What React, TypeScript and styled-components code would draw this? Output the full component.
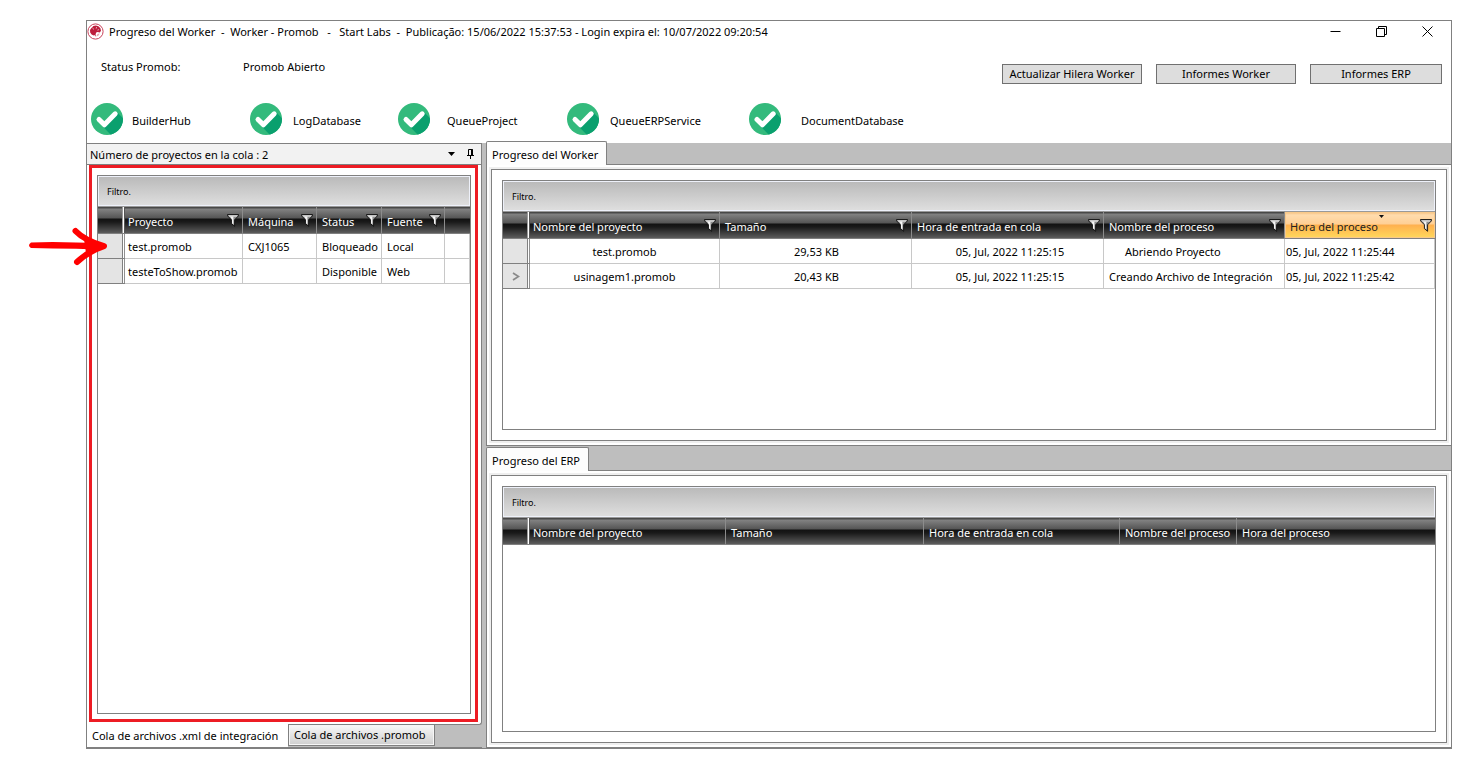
import React from 'react';
import styled, { createGlobalStyle, css } from 'styled-components';

const line = '#808080';
const strip = '#bebebe';
const cellLine = '#c8c8c8';
const darkHeader =
  'linear-gradient(to bottom, #484848 0 1px, #828282 2px, #555555 11px, #121212 12px, #1a1a1a 15px, #5c5c5c 100%)';

const GlobalStyle = createGlobalStyle`
  * { box-sizing: border-box; }
  body {
    margin: 0;
    background: #fff;
    color: #000;
    font: 11px/20px "Noto Sans", "Open Sans", sans-serif;
  }
  button {
    font: inherit;
    color: inherit;
    padding: 0;
    border: 0;
    background: none;
  }
`;

const Page = styled.div`
  display: flex;
  flex-direction: column;
  min-height: 100vh;
  padding: 20px 13px 16px 86px;
`;

const AppWindow = styled.main`
  flex: 1;
  display: flex;
  flex-direction: column;
  border: 1px solid ${line};
`;

const TitleBar = styled.header`
  display: flex;
  align-items: center;
  gap: 5px;
  height: 20px;
  padding: 0 1px 0 0;
`;

const Title = styled.h1`
  flex: 1;
  margin: 0;
  padding-top: 1px;
  font-size: 11px;
  font-weight: 400;
  white-space: pre;
`;

const WindowButtons = styled.div`
  display: flex;
`;

const WindowButton = styled.button`
  display: grid;
  place-items: center;
  width: 46px;
  height: 20px;
`;

const StatusRow = styled.section`
  display: flex;
  align-items: flex-start;
  margin-top: 16px;
  padding: 0 9px 0 14px;
`;

const StatusLabel = styled.span`
  width: 142px;
`;

const StatusValue = styled.span`
  flex: 1;
`;

const Actions = styled.div`
  display: flex;
  gap: 14px;
  padding-top: 7px;
`;

const ActionButton = styled.button<{ $width: number }>`
  width: ${(p) => p.$width}px;
  height: 20px;
  line-height: 18px;
  border: 1px solid #707070;
  background: #dddddd;
`;

const Services = styled.ul`
  display: grid;
  grid-template-columns: 159px 148px 169px 182px 1fr;
  margin: 0;
  padding: 19px 0 8px 4px;
  list-style: none;
`;

const Service = styled.li<{ $gap: number }>`
  display: flex;
  align-items: center;
  gap: ${(p) => p.$gap}px;
`;

const ServiceName = styled.span`
  padding-top: 3px;
`;

const Workspace = styled.div`
  flex: 1;
  display: grid;
  grid-template-columns: 395px 1fr;
  gap: 4px;
  background: ${strip};
`;

const QueuePanel = styled.section`
  display: flex;
  flex-direction: column;
`;

const QueueHeader = styled.div`
  display: flex;
  align-items: center;
  gap: 12px;
  height: 22px;
  padding: 0 7px 0 3px;
  border: solid ${line};
  border-width: 1px 1px 1px 0;
  background: #f2f2f2;
`;

const QueueTitle = styled.h2`
  flex: 1;
  margin: 0;
  padding-top: 1px;
  font-size: 11px;
  font-weight: 400;
`;

const IconButton = styled.button`
  display: grid;
  place-items: center;
`;

const QueueBody = styled.div`
  position: relative;
  flex: 1;
  display: flex;
  padding: 10px;
  border: solid ${line};
  border-width: 0 1px 1px 0;
  border-radius: 0 0 3px 0;
  background: #fff;
`;

const Highlight = styled.div`
  position: absolute;
  inset: 0 3px 2px 2px;
  border: 3px solid #ed1c24;
  pointer-events: none;
`;

const Arrow = styled.svg`
  position: absolute;
  left: -59px;
  top: 60px;
`;

const BottomTabs = styled.div`
  display: flex;
  align-items: flex-start;
  height: 23px;
  border-bottom: 1px solid ${line};
`;

const BottomTab = styled.button<{ $active?: boolean }>`
  position: relative;
  margin-top: -1px;
  text-align: left;
  ${(p) =>
    p.$active
      ? css`
          width: 201px;
          height: 23px;
          padding-left: 5px;
          background: #fff;
        `
      : css`
          width: 147px;
          height: 22px;
          padding-left: 5px;
          border: 1px solid ${line};
          background: linear-gradient(to bottom, #f8f8f8, #cfcfcf);
          box-shadow: inset 0 0 0 1px #f6f6f6;
        `}
`;

const ProgressColumn = styled.div`
  display: grid;
  grid-template-rows: 303fr 302fr;
`;

const ProgressPanel = styled.section`
  display: flex;
  flex-direction: column;
`;

const TabStrip = styled.div<{ $height: number }>`
  display: flex;
  align-items: flex-end;
  height: ${(p) => p.$height}px;
  box-shadow: inset 0 -1px 0 ${line};
`;

const Tab = styled.button`
  flex: none;
  height: 24px;
  padding: 3px 8px 0 5px;
  border: solid ${line};
  border-width: 1px 1px 0 1px;
  border-radius: 2px 2px 0 0;
  background: #fdfdfd;
`;

const TabBody = styled.div`
  flex: 1;
  display: flex;
  padding: 4px;
  border: solid ${line};
  border-width: 0 0 1px 1px;
  background: #fff;
`;

const Frame = styled.div`
  flex: 1;
  display: flex;
  padding: 10px;
  border: 1px solid ${line};
  box-shadow: 0 0 0 2px #efefef;
`;

const GridBox = styled.div`
  flex: 1;
  border: 1px solid ${line};
  background: #fff;
`;

const FilterBar = styled.div`
  height: 30px;
  padding: 1px 0 0 8px;
  border: 1px solid #eef1fa;
  background: linear-gradient(to bottom, #bababa, #dedede);
  font-size: 9px;
  line-height: 28px;
`;

const Table = styled.table`
  width: 100%;
  table-layout: fixed;
  border-collapse: separate;
  border-spacing: 0;
`;

const Col = styled.col<{ $width?: number }>`
  width: ${(p) => (p.$width ? `${p.$width}px` : 'auto')};
`;

const Th = styled.th<{ $first?: boolean; $sorted?: boolean }>`
  position: relative;
  height: 28px;
  padding: 4px 0 0 ${(p) => (p.$first ? 3 : 5)}px;
  border-top: 1px solid #999;
  border-bottom: 1px solid ${line};
  border-right: 1px solid #8c8c8c;
  background: ${darkHeader};
  color: #fff;
  font-weight: 400;
  text-align: left;
  white-space: nowrap;
  &:last-child {
    border-right: 0;
  }
  ${(p) =>
    p.$sorted &&
    css`
      color: #222;
      background: linear-gradient(to bottom, #f5bd78 0, #ffdcae 3px, #ffcf94 12px, #ffb04e 13px, #ffd95c 100%);
      box-shadow: inset 0 0 0 1px #f9c98a;
    `}
`;

const HeadContent = styled.div`
  display: flex;
  align-items: center;
  justify-content: space-between;
  padding-right: 3px;
`;

const FilterButton = styled.button`
  display: grid;
  margin-top: -4px;
`;

const SortMark = styled.svg`
  position: absolute;
  left: 94px;
  top: 3px;
`;

const CornerTh = styled.th`
  padding: 0;
  border-top: 1px solid #999;
  border-bottom: 1px solid ${line};
  background: linear-gradient(to right, transparent 0 24px, #9a9a9a 24px 25px, #fff 25px 26px, #555 26px 27px), ${darkHeader};
`;

const RowHead = styled.td`
  height: 25px;
  padding: 0 0 0 9px;
  border-bottom: 1px solid ${line};
  background: linear-gradient(to right, #e4e4e4 0 24px, ${line} 24px 25px, #fff 25px 26px, #909090 26px 27px);
`;

const Td = styled.td<{ $center?: boolean; $indent?: number }>`
  height: 25px;
  padding: 2px 0 0 ${(p) => p.$indent ?? 0}px;
  border-right: 1px solid ${cellLine};
  border-bottom: 1px solid ${cellLine};
  text-align: ${(p) => (p.$center ? 'center' : 'left')};
  white-space: nowrap;
`;

const AppLogo = () => (
  <svg width="17" height="17" viewBox="0 0 17 17" aria-hidden="true">
    <circle cx="8.5" cy="8.5" r="7.6" fill="#fff" stroke="#c8415a" strokeWidth="1" />
    <path
      d="M4.2 5.2 L6.4 3 L8.8 2.4 L11.4 3.2 L13.4 5.2 L14 7.8 L12.8 9.4 L10.6 9 L9.2 9.6 L8.6 11.2 L8.8 13.8 L7.4 12 L6.6 12.6 L4.6 11.6 L3.2 9.4 L3 7 Z"
      fill="#bd1e3c"
    />
    <path d="M5.4 5 L7 6.4 M9.6 4 L9.2 5.6 M12 6.6 L10.4 7.2" stroke="#fff" strokeWidth="0.6" />
    <path d="M9.2 13.6 L10.6 10.8 L12.8 10.6 L11.4 12.8 Z" fill="#eaa4b0" />
  </svg>
);

const CheckCircle = () => (
  <svg width="32" height="32" viewBox="0 0 32 32" aria-hidden="true">
    <defs>
      <clipPath id="disc">
        <circle cx="16" cy="16" r="16" />
      </clipPath>
    </defs>
    <circle cx="16" cy="16" r="16" fill="#33ba7c" />
    <path d="M26.4 9.6 L34 17.2 V34 H22 L11.8 23.6 Z" fill="#0aa06e" clipPath="url(#disc)" />
    <path
      d="M8 16.4 L13.4 21.8 L24.2 10.8"
      fill="none"
      stroke="#fff"
      strokeWidth="5"
      strokeLinecap="round"
      strokeLinejoin="round"
    />
  </svg>
);

const Funnel = () => (
  <svg width="12" height="13" viewBox="0 0 12 13" aria-hidden="true">
    <path d="M0.5 0.5 H11.5 V1.8 L7.6 5.8 V12.3 L4.4 9.6 V5.8 L0.5 1.8 Z" fill="#8d8d8d" stroke="#111" strokeWidth="0.9" />
    <path d="M1.5 1.4 H10.5 L9.6 2.6 H2.4 Z" fill="#fff" />
    <path d="M3 2.6 H6.4 V10.4 L5 9.2 V5.4 Z" fill="#f4f4f4" />
  </svg>
);

interface Column {
  title: string;
  width?: number;
  sorted?: boolean;
}

interface Cell {
  text: string;
  indent?: number;
  center?: boolean;
}

interface Row {
  current?: boolean;
  cells: Cell[];
}

interface DataGridProps {
  columns: Column[];
  rows?: Row[];
  filters?: boolean;
}

const DataGrid = ({ columns, rows = [], filters }: DataGridProps) => (
  <GridBox>
    <FilterBar>Filtro.</FilterBar>
    <Table>
      <colgroup>
        <Col $width={27} />
        {columns.map((c, i) => (
          <Col key={i} $width={c.width} />
        ))}
      </colgroup>
      <thead>
        <tr>
          <CornerTh />
          {columns.map((c, i) => (
            <Th key={i} $first={i === 0} $sorted={c.sorted}>
              {c.title && (
                <HeadContent>
                  {c.title}
                  {filters && (
                    <FilterButton aria-label={`Filtrar ${c.title}`}>
                      <Funnel />
                    </FilterButton>
                  )}
                </HeadContent>
              )}
              {c.sorted && (
                <SortMark width="5" height="3" viewBox="0 0 5 3" aria-hidden="true">
                  <path d="M0 0 H5 L2.5 3 Z" fill="#111" />
                </SortMark>
              )}
            </Th>
          ))}
        </tr>
      </thead>
      <tbody>
        {rows.map((r, i) => (
          <tr key={i}>
            <RowHead>
              {r.current && (
                <svg width="8" height="9" viewBox="0 0 8 9" display="block" aria-hidden="true">
                  <path d="M1 1 L6.5 4.5 L1 8" fill="none" stroke="#8a8a8a" strokeWidth="1.8" />
                </svg>
              )}
            </RowHead>
            {r.cells.map((c, j) => (
              <Td key={j} $center={c.center} $indent={c.indent}>
                {c.text}
              </Td>
            ))}
          </tr>
        ))}
      </tbody>
    </Table>
  </GridBox>
);

const services = [
  { name: 'BuilderHub', gap: 9 },
  { name: 'LogDatabase', gap: 11 },
  { name: 'QueueProject', gap: 17 },
  { name: 'QueueERPService', gap: 11 },
  { name: 'DocumentDatabase', gap: 20 },
];

const queueColumns: Column[] = [
  { title: 'Proyecto', width: 118 },
  { title: 'Máquina', width: 74 },
  { title: 'Status', width: 65 },
  { title: 'Fuente', width: 63 },
  { title: '' },
];

const queueRow = (project: string, machine: string, status: string, source: string): Row => ({
  cells: [
    { text: project, indent: 3 },
    { text: machine, indent: 5 },
    { text: status, indent: 5 },
    { text: source, indent: 5 },
    { text: '' },
  ],
});

const queueRows = [
  queueRow('test.promob', 'CXJ1065', 'Bloqueado', 'Local'),
  queueRow('testeToShow.promob', '', 'Disponible', 'Web'),
];

const workerColumns: Column[] = [
  { title: 'Nombre del proyecto', width: 190 },
  { title: 'Tamaño', width: 192 },
  { title: 'Hora de entrada en cola', width: 192 },
  { title: 'Nombre del proceso', width: 181 },
  { title: 'Hora del proceso', sorted: true },
];

const workerRows: Row[] = [
  {
    cells: [
      { text: 'test.promob', center: true },
      { text: '29,53 KB', center: true, indent: 2 },
      { text: '05, Jul, 2022 11:25:15', center: true, indent: 5 },
      { text: 'Abriendo Proyecto', indent: 21 },
      { text: '05, Jul, 2022 11:25:44', indent: 1 },
    ],
  },
  {
    current: true,
    cells: [
      { text: 'usinagem1.promob', center: true },
      { text: '20,43 KB', center: true, indent: 2 },
      { text: '05, Jul, 2022 11:25:15', center: true, indent: 5 },
      { text: 'Creando Archivo de Integración', indent: 5 },
      { text: '05, Jul, 2022 11:25:42', indent: 1 },
    ],
  },
];

const erpColumns: Column[] = [
  { title: 'Nombre del proyecto', width: 196 },
  { title: 'Tamaño', width: 198 },
  { title: 'Hora de entrada en cola', width: 196 },
  { title: 'Nombre del proceso', width: 117 },
  { title: 'Hora del proceso' },
];

export default function App() {
  return (
    <Page>
      <GlobalStyle />
      <AppWindow>
        <TitleBar>
          <AppLogo />
          <Title>
            {
              'Progreso del Worker  -  Worker - Promob   -   Start Labs  -  Publicação: 15/06/2022 15:37:53 - Login expira el: 10/07/2022 09:20:54'
            }
          </Title>
          <WindowButtons>
            <WindowButton aria-label="Minimizar">
              <svg width="11" height="11" viewBox="0 0 11 11">
                <path d="M0.5 5.5 H10.5" stroke="#000" />
              </svg>
            </WindowButton>
            <WindowButton aria-label="Restaurar">
              <svg width="11" height="11" viewBox="0 0 11 11">
                <path d="M0.5 2.5 H8.5 V10.5 H0.5 Z M2.5 2.5 V0.5 H10.5 V8.5 H8.5" fill="none" stroke="#000" />
              </svg>
            </WindowButton>
            <WindowButton aria-label="Cerrar">
              <svg width="11" height="11" viewBox="0 0 11 11">
                <path d="M0.5 0.5 L10.5 10.5 M10.5 0.5 L0.5 10.5" stroke="#000" />
              </svg>
            </WindowButton>
          </WindowButtons>
        </TitleBar>

        <StatusRow>
          <StatusLabel>Status Promob:</StatusLabel>
          <StatusValue>Promob Abierto</StatusValue>
          <Actions>
            <ActionButton $width={140}>Actualizar Hilera Worker</ActionButton>
            <ActionButton $width={140}>Informes Worker</ActionButton>
            <ActionButton $width={132}>Informes ERP</ActionButton>
          </Actions>
        </StatusRow>

        <Services>
          {services.map((s) => (
            <Service key={s.name} $gap={s.gap}>
              <CheckCircle />
              <ServiceName>{s.name}</ServiceName>
            </Service>
          ))}
        </Services>

        <Workspace>
          <QueuePanel>
            <QueueHeader>
              <QueueTitle>Número de proyectos en la cola : 2</QueueTitle>
              <IconButton aria-label="Opciones">
                <svg width="7" height="4" viewBox="0 0 7 4">
                  <path d="M0 0 H7 L3.5 4 Z" fill="#000" />
                </svg>
              </IconButton>
              <IconButton aria-label="Fijar panel">
                <svg width="7" height="10" viewBox="0 0 7 10">
                  <path d="M1.5 6 V0.5 H5.5 V6 M0 6.5 H7 M3.5 7 V10" fill="none" stroke="#000" />
                  <path d="M4 0.5 H6 V6 H4 Z" fill="#000" />
                </svg>
              </IconButton>
            </QueueHeader>
            <QueueBody>
              <DataGrid columns={queueColumns} rows={queueRows} filters />
              <Highlight />
              <Arrow width="82" height="42" viewBox="0 0 82 42" aria-hidden="true">
                <path d="M3 17.4 Q24 16.4 48 17.4 L70 18 V24.6 L48 23.8 Q24 23.4 3 23 Q-1 20.2 3 17.4 Z" fill="#f00" />
                <path
                  d="M47.5 6 Q56 15 76 21.2 Q61 26 49 37"
                  fill="none"
                  stroke="#f00"
                  strokeWidth="6"
                  strokeLinecap="round"
                  strokeLinejoin="round"
                />
                <path d="M56 14 L78 21.2 L58 28 Z" fill="#f00" />
              </Arrow>
            </QueueBody>
            <BottomTabs role="tablist">
              <BottomTab role="tab" aria-selected="true" $active>
                Cola de archivos .xml de integración
              </BottomTab>
              <BottomTab role="tab" aria-selected="false">
                Cola de archivos .promob
              </BottomTab>
            </BottomTabs>
          </QueuePanel>

          <ProgressColumn>
            <ProgressPanel>
              <TabStrip role="tablist" $height={22}>
                <Tab role="tab" aria-selected="true">
                  Progreso del Worker
                </Tab>
              </TabStrip>
              <TabBody>
                <Frame>
                  <DataGrid columns={workerColumns} rows={workerRows} filters />
                </Frame>
              </TabBody>
            </ProgressPanel>
            <ProgressPanel>
              <TabStrip role="tablist" $height={25}>
                <Tab role="tab" aria-selected="true">
                  Progreso del ERP
                </Tab>
              </TabStrip>
              <TabBody>
                <Frame>
                  <DataGrid columns={erpColumns} />
                </Frame>
              </TabBody>
            </ProgressPanel>
          </ProgressColumn>
        </Workspace>
      </AppWindow>
    </Page>
  );
}
